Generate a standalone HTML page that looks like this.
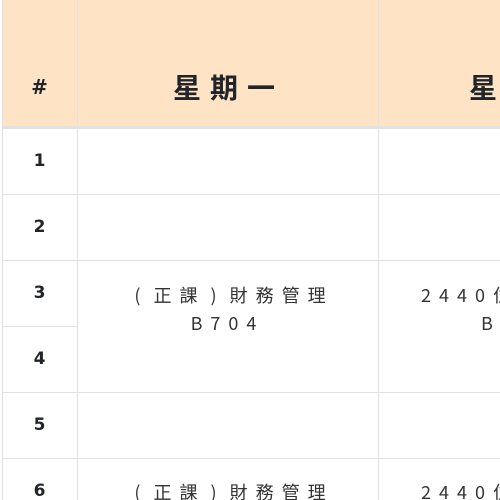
<!DOCTYPE html>
<html><head><meta charset="utf-8"><style>
html,body{margin:0;width:500px;height:500px;overflow:hidden}
body{background:#fff;font-family:"Liberation Sans","Noto Sans CJK TC",sans-serif;color:#212529;position:relative}
#w{position:absolute;left:0;top:0;width:500px;height:500px;overflow:hidden}
.a{position:absolute}
.hd{left:2px;top:0;width:498px;height:126px;background:#fee3c4}
.vl{width:1px;background:#dee2e6;top:0;height:500px}
.hl{height:1px;background:#dee2e6;left:2px;width:498px}
.n{width:75px;left:2px;text-align:center;font-weight:bold;font-size:17px;font-family:"DejaVu Sans",sans-serif}
.c{text-align:center;font-size:18px;letter-spacing:8px;color:#333;line-height:28px;font-family:"Noto Sans CJK TC",sans-serif}
.p{padding:0 5px}
</style></head><body><div id="w">
<div class="a hd"></div>
<div class="a" style="left:2px;top:126px;width:498px;height:3px;background:#dee2e6"></div>
<div class="a vl" style="left:2px"></div>
<div class="a vl" style="left:77px"></div>
<div class="a vl" style="left:378px"></div>
<div class="a hl" style="top:194px"></div>
<div class="a hl" style="top:260px"></div>
<div class="a hl" style="top:326px;width:75px"></div>
<div class="a hl" style="top:392px"></div>
<div class="a hl" style="top:458px"></div>
<div class="a n" style="top:75px;font-size:20px">#</div>
<div class="a" style="left:77px;width:301px;top:67px;text-align:center;font-weight:bold;font-size:28px;letter-spacing:9px;text-indent:2px;font-family:'Noto Sans CJK TC',sans-serif">星期一</div>
<div class="a" style="left:469px;top:67px;font-weight:bold;font-size:28px;font-family:'Noto Sans CJK TC',sans-serif">星</div>
<div class="a n" style="top:151px">1</div>
<div class="a n" style="top:217px">2</div>
<div class="a n" style="top:283px">3</div>
<div class="a n" style="top:349px">4</div>
<div class="a n" style="top:415px">5</div>
<div class="a n" style="top:481px">6</div>
<div class="a c" style="left:77px;width:301px;top:281px;text-indent:8px"><span class="p">(</span>正課<span class="p">)</span>財務管理<br>B704</div>
<div class="a c" style="left:77px;width:301px;top:478px;text-indent:8px"><span class="p">(</span>正課<span class="p">)</span>財務管理</div>
<div class="a c" style="left:421px;top:281px;white-space:nowrap;text-align:left">2440位置<br><span style="padding-left:60px">B704</span></div>
<div class="a c" style="left:421px;top:478px;white-space:nowrap;text-align:left">2440位置</div>
</div></body></html>
